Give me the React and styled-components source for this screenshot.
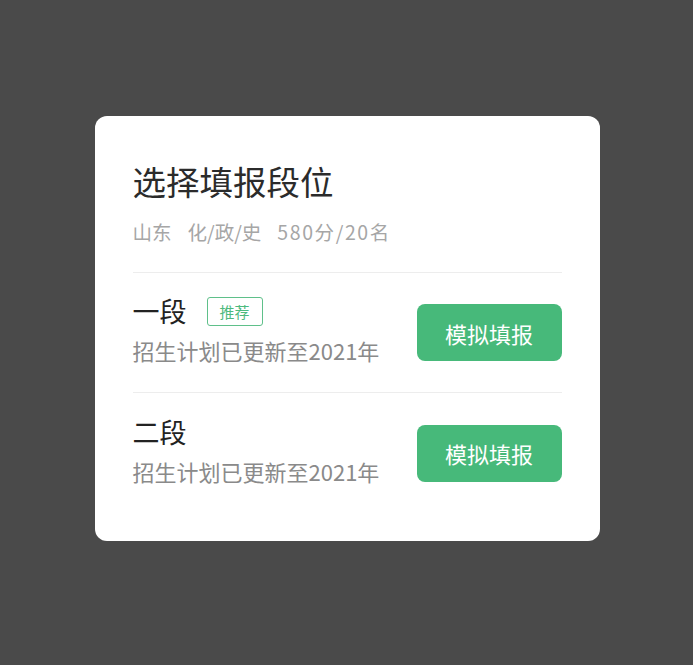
import React from 'react';
import styled, { createGlobalStyle } from 'styled-components';

const GlobalStyle = createGlobalStyle`
  html, body {
    margin: 0;
    padding: 0;
    background: #4a4a4a;
  }
  body {
    font-family: "Noto Sans CJK SC", "Noto Sans", sans-serif;
  }
`;

const Screen = styled.div`
  width: 693px;
  height: 665px;
  display: flex;
  justify-content: center;
  align-items: flex-start;
  padding-top: 116px;
  box-sizing: border-box;
`;

const Card = styled.div`
  width: 505px;
  margin-left: 1px;
  background: #fff;
  border-radius: 12px;
  padding: 0 38px 28px 38px;
  box-sizing: border-box;
`;

const Title = styled.h1`
  margin: 0;
  padding-top: 43px;
  font-size: 33.5px;
  line-height: 44px;
  font-weight: 400;
  color: #2b2b2b;
`;

const Meta = styled.div`
  display: flex;
  gap: 16px;
  margin-top: 16px;
  font-size: 19.5px;
  line-height: 26px;
  color: #a6a6a6;
  padding-bottom: 27px;
  border-bottom: 1px solid #ededed;
`;

const Score = styled.span`
  letter-spacing: 1.6px;
`;

const Row = styled.div`
  height: 120px;
  display: flex;
  align-items: center;
  justify-content: space-between;
  border-bottom: ${(p) => (p.last ? 'none' : '1px solid #ededed')};
  box-sizing: border-box;
`;

const Info = styled.div`
  display: flex;
  flex-direction: column;
  margin-bottom: 7px;
`;

const NameLine = styled.div`
  display: flex;
  align-items: center;
  gap: 20px;
`;

const Name = styled.span`
  font-size: 27px;
  line-height: 36px;
  color: #222;
`;

const Tag = styled.span`
  font-size: 15px;
  line-height: 27px;
  padding: 0 12px;
  color: #4dba7e;
  border: 1px solid #5fc08a;
  border-radius: 3px;
`;

const Note = styled.div`
  margin-top: 6px;
  font-size: 22px;
  line-height: 30px;
  color: #8a8a8a;
`;

const ActionButton = styled.button`
  width: 145px;
  height: 57px;
  border: none;
  border-radius: 8px;
  background: #47b97a;
  color: #fff;
  font-family: inherit;
  font-size: 22px;
  cursor: pointer;
`;

const segments = [
  { name: '一段', tag: '推荐', note: '招生计划已更新至2021年' },
  { name: '二段', note: '招生计划已更新至2021年' },
];

export default function App() {
  return (
    <>
      <GlobalStyle />
      <Screen>
        <Card>
          <Title>选择填报段位</Title>
          <Meta>
            <span>山东</span>
            <span>化/政/史</span>
            <Score>580分/20名</Score>
          </Meta>
          {segments.map((s, i) => (
            <Row key={s.name} last={i === segments.length - 1}>
              <Info>
                <NameLine>
                  <Name>{s.name}</Name>
                  {s.tag && <Tag>{s.tag}</Tag>}
                </NameLine>
                <Note>{s.note}</Note>
              </Info>
              <ActionButton>模拟填报</ActionButton>
            </Row>
          ))}
        </Card>
      </Screen>
    </>
  );
}
